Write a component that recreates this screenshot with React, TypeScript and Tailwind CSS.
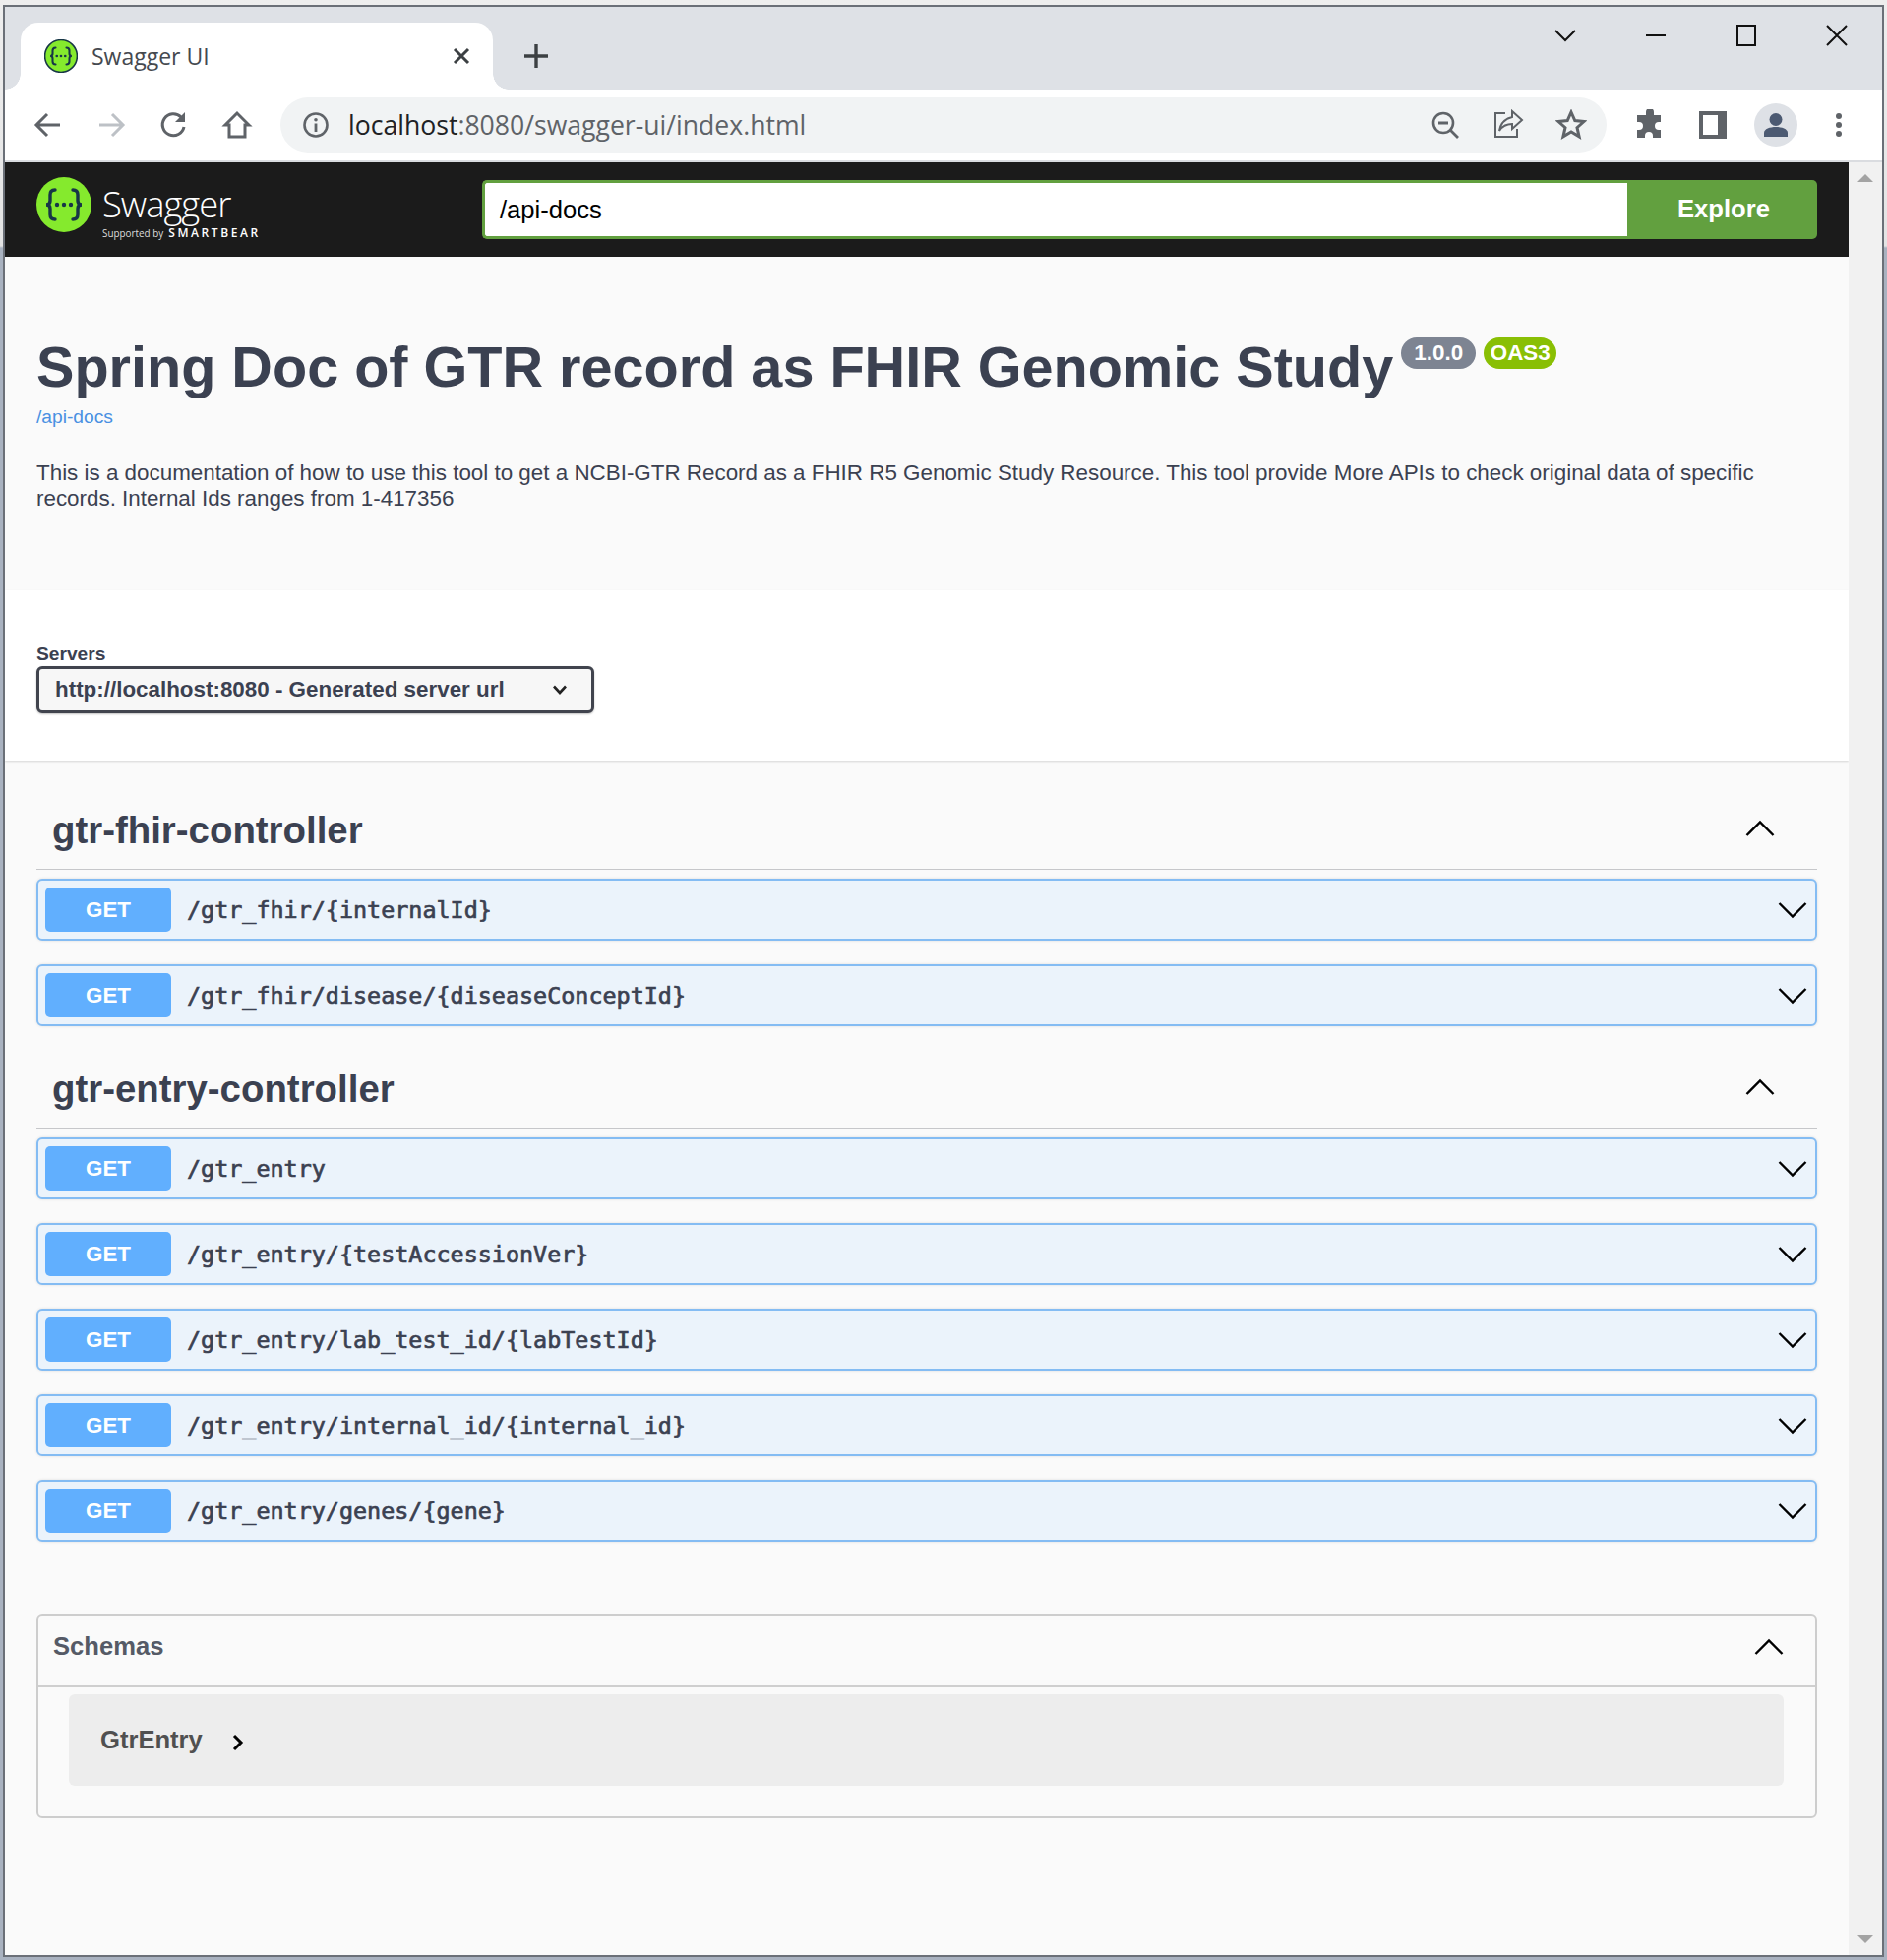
const ARIAL = "font-['Liberation_Sans',Arial,sans-serif]";

const FHIR_PATHS = ['/gtr_fhir/{internalId}', '/gtr_fhir/disease/{diseaseConceptId}'];
const ENTRY_PATHS = [
  '/gtr_entry',
  '/gtr_entry/{testAccessionVer}',
  '/gtr_entry/lab_test_id/{labTestId}',
  '/gtr_entry/internal_id/{internal_id}',
  '/gtr_entry/genes/{gene}',
];

function SwaggerMark({ size }: { size: number }) {
  return (
    <svg width={size} height={size} viewBox="0 0 56 56" className="shrink-0">
      <circle cx="28" cy="28" r="27" fill="#85ea2d" stroke="#173647" strokeWidth={size < 40 ? 2.5 : 0} />
      <g fill="none" stroke="#173647" strokeWidth="3.4" strokeLinecap="round">
        <path d="M19 14c-4 0-5 2-5 5v5c0 2-1 4-4 4 3 0 4 2 4 4v5c0 3 1 5 5 5" />
        <path d="M37 14c4 0 5 2 5 5v5c0 2 1 4 4 4-3 0-4 2-4 4v5c0 3-1 5-5 5" />
      </g>
      <g fill="#173647">
        <circle cx="21" cy="28" r="2.2" />
        <circle cx="28" cy="28" r="2.2" />
        <circle cx="35" cy="28" r="2.2" />
      </g>
    </svg>
  );
}

function ToolIcon({ children, w = 32, h = 32 }: { children: React.ReactNode; w?: number; h?: number }) {
  return (
    <div className="w-16 h-14 flex items-center justify-center shrink-0">
      <svg width={w} height={h} viewBox="0 0 32 32" fill="none">
        {children}
      </svg>
    </div>
  );
}

function WinButton({ children }: { children: React.ReactNode }) {
  return (
    <div className="w-[92px] h-[58px] flex items-center justify-center">
      <svg width="24" height="24" viewBox="0 0 24 24" fill="none" stroke="#111" strokeWidth="2">
        {children}
      </svg>
    </div>
  );
}

function Chevron({ up, className }: { up?: boolean; className?: string }) {
  return (
    <svg width="30" height="18" viewBox="0 0 30 18" fill="none" stroke="#000" strokeWidth="2.4" className={className}>
      {up ? <path d="M1.5 16 15 2.5 28.5 16" /> : <path d="M1.5 2 15 15.5 28.5 2" />}
    </svg>
  );
}

function OpRow({ path }: { path: string }) {
  return (
    <div className="flex items-center h-[63px] mb-6 bg-[#ebf3fb] border-2 border-[#84bcf3] rounded-[6px] pl-[7px] pr-[8px] shadow-[0_0_3px_rgba(0,0,0,0.12)]">
      <div className={`w-[128px] h-[45px] flex items-center justify-center bg-[#61affe] rounded-[5px] text-white font-bold text-[22.4px] ${ARIAL}`}>
        GET
      </div>
      <div className="flex-1 ml-4 mt-[2px] font-['DejaVu_Sans_Mono',monospace] [-webkit-text-stroke:0.7px_#3b4151] text-[23.4px] text-[#3b4151]">
        {path}
      </div>
      <Chevron />
    </div>
  );
}

function TagSection({ name, paths }: { name: string; paths: string[] }) {
  return (
    <section>
      <div className="flex items-center justify-between h-[80px] pl-4 pr-[43px] border-b border-[#c6c7ca] mb-[9px]">
        <h3 className={`text-[38.4px] font-bold text-[#3b4151] ${ARIAL}`}>{name}</h3>
        <Chevron up className="mb-[3px]" />
      </div>
      {paths.map((p) => (
        <OpRow key={p} path={p} />
      ))}
    </section>
  );
}

export default function App() {
  return (
    <div className="w-[1918px] h-[1992px] bg-[linear-gradient(to_bottom,#eeeeee_0,#e4e4e4_250px,#a9b2c0_252px,#a9b2c0_100%)] pt-[5px] pl-[3px] pr-[3px] pb-[3px] overflow-hidden">
      <div className="h-full border-2 border-[#6b7078] flex flex-col bg-white overflow-hidden">
        {/* Tab strip */}
        <div className="flex h-[84px] bg-[#dee1e6] shrink-0">
          <div className="relative ml-[16px] mt-4 w-[480px] h-[68px] bg-white rounded-t-[18px] flex items-center pl-[24px]">
            <div className="absolute -left-4 bottom-0 w-4 h-4 bg-[radial-gradient(circle_at_0_0,#dee1e6_15.5px,#ffffff_16px)]" />
            <div className="absolute -right-4 bottom-0 w-4 h-4 bg-[radial-gradient(circle_at_100%_0,#dee1e6_15.5px,#ffffff_16px)]" />
            <SwaggerMark size={34} />
            <span className="ml-[14px] flex-1 font-['Open_Sans',sans-serif] text-[23px] text-[#45494f]">Swagger UI</span>
            <svg width="18" height="18" viewBox="0 0 18 18" stroke="#3c4043" strokeWidth="3" className="mr-[23px]">
              <path d="M2 2 16 16M16 2 2 16" />
            </svg>
          </div>
          <div className="ml-[31px] mt-6 h-[52px] flex items-center">
            <svg width="26" height="26" viewBox="0 0 26 26" stroke="#3c4043" strokeWidth="3.4">
              <path d="M13 1v24M1 13h24" />
            </svg>
          </div>
          <div className="flex-1" />
          <div className="flex">
            <WinButton>
              <path d="M2 7 12 17 22 7" />
            </WinButton>
            <WinButton>
              <path d="M2 12h20" />
            </WinButton>
            <WinButton>
              <rect x="3" y="2" width="18" height="20" />
            </WinButton>
            <WinButton>
              <path d="M2 2 22 22M22 2 2 22" />
            </WinButton>
          </div>
        </div>

        {/* Toolbar */}
        <div className="flex items-start h-[74px] pt-2 pl-[12px] bg-white border-b-2 border-[#dadce0] shrink-0">
          <ToolIcon>
            <path d="M28 16H5M15 5 4 16l11 11" stroke="#5f6368" strokeWidth="3" />
          </ToolIcon>
          <ToolIcon>
            <path d="M4 16h23M17 5l11 11-11 11" stroke="#bdc1c6" strokeWidth="3" />
          </ToolIcon>
          <ToolIcon>
            <path d="M26 18a11 11 0 1 1-3-10" stroke="#5f6368" strokeWidth="3" />
            <path d="M27 3v10H17z" fill="#5f6368" />
          </ToolIcon>
          <ToolIcon>
            <path d="M16 4 4 16h4v12h16V16h4z" stroke="#5f6368" strokeWidth="3" />
          </ToolIcon>
          <div className="ml-3 w-[1348px] h-14 bg-[#f1f3f4] rounded-full flex items-center shrink-0">
            <svg width="28" height="28" viewBox="0 0 28 28" fill="none" className="ml-[22px]">
              <circle cx="14" cy="14" r="11.5" stroke="#5f6368" strokeWidth="2.6" />
              <path d="M14 12.5V21" stroke="#5f6368" strokeWidth="2.8" />
              <circle cx="14" cy="8.7" r="1.8" fill="#5f6368" />
            </svg>
            <div className="ml-[19px] mt-[1px] flex-1 font-['Open_Sans',sans-serif] text-[26.6px] text-[#5f6368]">
              <span className="text-[#202124]">localhost</span>:8080/swagger-ui/index.html
            </div>
            <ToolIcon>
              <circle cx="14" cy="14" r="10" stroke="#5f6368" strokeWidth="2.6" />
              <path d="M9 14h10M21 21l8 8" stroke="#5f6368" strokeWidth="2.8" />
            </ToolIcon>
            <ToolIcon>
              <path d="M13 4H3v24h22v-8" stroke="#5f6368" strokeWidth="2" />
              <path d="M20 2l10 9-10 9v-5c-6 0-10 2-13 7 1-7 5-12 13-14z" stroke="#5f6368" strokeWidth="2" />
            </ToolIcon>
            <ToolIcon>
              <path
                d="m16 3 3.8 8.6 9.2.9-7 6.2 2.1 9.2-8.1-4.9-8.1 4.9 2.1-9.2-7-6.2 9.2-.9z"
                stroke="#5f6368"
                strokeWidth="3"
                strokeLinejoin="miter"
              />
            </ToolIcon>
            <div className="w-1" />
          </div>
          <div className="ml-3 flex">
            <ToolIcon>
              <path
                d="M12 3a4 4 0 0 1 8 0v3h7v7h-2a4 4 0 0 0 0 8h2v8h-8v-2a4 4 0 0 0-8 0v2H3v-8h2a4 4 0 0 0 0-8H3V6h9z"
                fill="#5f6368"
              />
            </ToolIcon>
            <ToolIcon>
              <rect x="2" y="2" width="28" height="28" fill="#5f6368" />
              <rect x="6" y="6" width="15" height="20" fill="#fff" />
            </ToolIcon>
            <div className="w-16 h-14 flex items-center justify-center">
              <div className="w-[44px] h-[44px] rounded-full bg-[#dee1e6] flex items-center justify-center">
                <svg width="26" height="26" viewBox="0 0 26 26" fill="#4c5a72">
                  <circle cx="13" cy="7.5" r="6.5" />
                  <path d="M1 25v-4c0-4 6-6 12-6s12 2 12 6v4z" />
                </svg>
              </div>
            </div>
            <ToolIcon>
              <circle cx="16" cy="7" r="3" fill="#5f6368" />
              <circle cx="16" cy="16" r="3" fill="#5f6368" />
              <circle cx="16" cy="25" r="3" fill="#5f6368" />
            </ToolIcon>
          </div>
        </div>

        {/* Page + scrollbar */}
        <div className="flex flex-1 min-h-0">
          <div className={`w-[1874px] shrink-0 bg-[#fafafa] ${ARIAL}`}>
            {/* Swagger topbar */}
            <div className="flex items-center h-[96px] bg-[#1b1b1b] pl-[32px] pr-8">
              <svg width="56" height="56" viewBox="0 0 56 56" className="shrink-0 mb-[10px]">
                <circle cx="28" cy="28" r="28" fill="#85ea2d" />
                <g fill="none" stroke="#173647" strokeWidth="3.4" strokeLinecap="round">
                  <path d="M19 13c-4 0-5 2-5 5v6c0 2-1 4-4 4 3 0 4 2 4 4v6c0 3 1 5 5 5" />
                  <path d="M37 13c4 0 5 2 5 5v6c0 2 1 4 4 4-3 0-4 2-4 4v6c0 3-1 5-5 5" />
                </g>
                <g fill="#173647">
                  <circle cx="21" cy="28" r="2.2" />
                  <circle cx="28" cy="28" r="2.2" />
                  <circle cx="35" cy="28" r="2.2" />
                </g>
              </svg>
              <div className="ml-[11px] mt-1 w-[172px] flex flex-col text-white font-['Open_Sans',sans-serif] leading-none">
                <span className="text-[36.4px] font-light tracking-[-1px] leading-[38px]">Swagger</span>
                <span className="flex items-baseline mt-[5px] h-3">
                  <span className="text-[9.9px] leading-3 text-[#ddd]">Supported by</span>
                  <span className="ml-[5px] text-[12px] leading-3 font-semibold tracking-[2.6px]">SMARTBEAR</span>
                </span>
              </div>
              <div className="ml-[214px] flex-1 flex h-[60px] min-w-0">
                <div className="flex-1 bg-white border-[3px] border-r-0 border-[#62a03f] rounded-l-[5px] flex items-center pl-[15px] text-[25.6px] text-black">
                  /api-docs
                </div>
                <div className="w-[193px] bg-[#62a03f] rounded-r-[5px] flex items-center justify-center pl-[3px] pb-[2px] text-white font-bold text-[25.6px]">
                  Explore
                </div>
              </div>
            </div>

            {/* Info */}
            <div className="h-[339px] px-8 pt-[75px] text-[#3b4151]">
              <div className="flex items-start">
                <h2 className="text-[57.6px] leading-[75px] font-bold">Spring Doc of GTR record as FHIR Genomic Study</h2>
                <span className="ml-2 mt-[7px] w-[76px] h-8 rounded-full bg-[#7d8492] text-white font-bold text-[22.4px] flex items-center justify-center">
                  1.0.0
                </span>
                <span className="ml-2 mt-[7px] w-[74px] h-8 rounded-full bg-[#89bf04] text-white font-bold text-[22.4px] flex items-center justify-center">
                  OAS3
                </span>
              </div>
              <a className="block text-[19.2px] leading-[26px] text-[#4990e2]">/api-docs</a>
              <p className="mt-[31px] text-[22.4px] leading-[26px] w-[1790px]">
                This is a documentation of how to use this tool to get a NCBI-GTR Record as a FHIR R5 Genomic Study Resource. This tool provide More APIs to check original data of specific records. Internal Ids ranges from 1-417356
              </p>
            </div>

            {/* Servers */}
            <div className="h-[173px] bg-white px-8 pt-[54px] shadow-[0_1px_2px_rgba(0,0,0,0.15)]">
              <div className="text-[19.2px] leading-[21px] font-bold text-[#3b4151]">Servers</div>
              <div className="mt-[2px] w-[567px] h-[48px] flex items-center justify-between pl-4 pr-6 bg-[#f7f7f7] border-[3px] border-[#41444e] rounded-[6px] shadow-[0_1px_2px_rgba(0,0,0,0.25)] text-[22.4px] font-bold text-[#3b4151]">
                <span>http://localhost:8080 - Generated server url</span>
                <svg width="16" height="10" viewBox="0 0 16 10" fill="none" stroke="#222" strokeWidth="2.6">
                  <path d="M2 1.5 8 8l6-6.5" />
                </svg>
              </div>
            </div>

            {/* Operations */}
            <div className="px-8 pt-[31px]">
              <TagSection name="gtr-fhir-controller" paths={FHIR_PATHS} />
              <TagSection name="gtr-entry-controller" paths={ENTRY_PATHS} />

              {/* Schemas */}
              <div className="mt-[73px] h-[208px] border-2 border-[#cdcdcd] rounded-[6px]">
                <div className="flex items-center justify-between h-[73px] pb-2 pl-[15px] pr-[32px] border-b-2 border-[#cfcfcf]">
                  <span className="text-[25.6px] font-bold text-[#555a66]">Schemas</span>
                  <Chevron up />
                </div>
                <div className="mt-[7px] ml-[31px] mr-8 h-[93px] bg-[#ededed] rounded-[6px] flex items-center pl-8">
                  <span className="text-[25.6px] font-bold text-[#505050]">GtrEntry</span>
                  <svg width="14" height="18" viewBox="0 0 14 18" fill="none" stroke="#000" strokeWidth="3" className="ml-[29px] mt-1">
                    <path d="M3 2l7 7-7 7" />
                  </svg>
                </div>
              </div>
            </div>
          </div>

          {/* Scrollbar */}
          <div className="flex-1 bg-[#f1f1f1] flex flex-col items-center justify-between pt-3 pb-[12px]">
            <div className="w-0 h-0 border-x-[8px] border-x-transparent border-b-[8px] border-b-[#a3a3a3]" />
            <div className="w-0 h-0 border-x-[8px] border-x-transparent border-t-[8px] border-t-[#a3a3a3]" />
          </div>
        </div>
      </div>
    </div>
  );
}
